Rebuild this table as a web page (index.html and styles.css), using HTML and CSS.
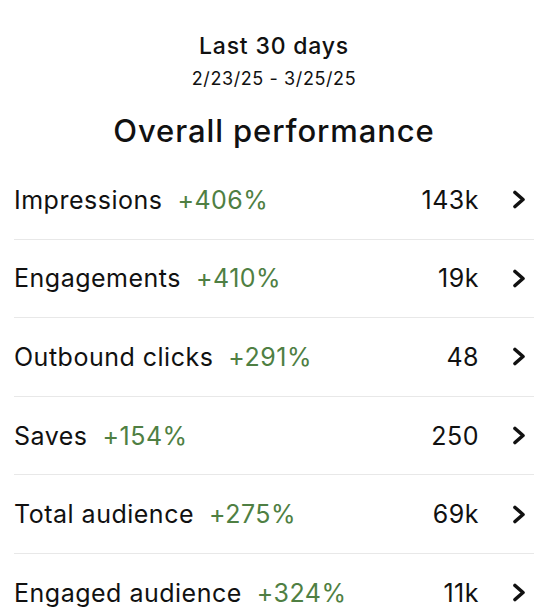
FILE: index.html
```html
<!DOCTYPE html>
<html>
  <head>
    <title>Overall performance</title>
    <link rel="stylesheet" href="styles.css">
  </head>
  <body>
    <div class="panel">
      <div class="range">
        <div class="range-title">Last 30 days</div>
        <div class="range-dates">2/23/25 - 3/25/25</div>
      </div>
      <h1>Overall performance</h1>
      <ul class="metrics">
        <li class="metric">
          <span class="name">Impressions</span>
          <span class="change">+406%</span>
          <span class="value">143k</span>
          <svg class="chev" viewBox="0 0 15 19"><polyline points="3,2.5 11,9.5 3,16.5"/></svg>
        </li>
        <li class="metric">
          <span class="name">Engagements</span>
          <span class="change">+410%</span>
          <span class="value">19k</span>
          <svg class="chev" viewBox="0 0 15 19"><polyline points="3,2.5 11,9.5 3,16.5"/></svg>
        </li>
        <li class="metric">
          <span class="name">Outbound clicks</span>
          <span class="change">+291%</span>
          <span class="value">48</span>
          <svg class="chev" viewBox="0 0 15 19"><polyline points="3,2.5 11,9.5 3,16.5"/></svg>
        </li>
        <li class="metric">
          <span class="name">Saves</span>
          <span class="change">+154%</span>
          <span class="value">250</span>
          <svg class="chev" viewBox="0 0 15 19"><polyline points="3,2.5 11,9.5 3,16.5"/></svg>
        </li>
        <li class="metric">
          <span class="name">Total audience</span>
          <span class="change">+275%</span>
          <span class="value">69k</span>
          <svg class="chev" viewBox="0 0 15 19"><polyline points="3,2.5 11,9.5 3,16.5"/></svg>
        </li>
        <li class="metric">
          <span class="name">Engaged audience</span>
          <span class="change">+324%</span>
          <span class="value">11k</span>
          <svg class="chev" viewBox="0 0 15 19"><polyline points="3,2.5 11,9.5 3,16.5"/></svg>
        </li>
      </ul>
    </div>
  </body>
</html>
```

FILE: styles.css
```css
/* Performance summary panel */
body {
  margin: 0;
  padding: 0;
  background-color: #fff;
  font-family: Inter, "Noto Sans", sans-serif;
  color: #111;
}

.panel {
  width: 520px;
  padding: 32px 17px 0 14px;
}

.range {
  text-align: center;
}

.range-title {
  font-size: 23px;
  font-weight: 500;
  line-height: 28px;
  letter-spacing: 0.8px;
}

.range-dates {
  font-size: 18px;
  line-height: 22px;
  margin-top: 8px;
  letter-spacing: 0.6px;
}

h1 {
  margin: 21px 0 0;
  text-align: center;
  font-size: 31px;
  font-weight: 500;
  line-height: 40px;
  letter-spacing: 0.9px;
}

.metrics {
  list-style: none;
  margin: 10px 0 0;
  padding: 0;
}

.metric {
  display: flex;
  align-items: center;
  height: 77.6px;
  border-bottom: 1px solid #e8e8e8; /* Light grey divider */
  font-size: 25px;
  letter-spacing: 0.5px;
}

.metric:last-child {
  border-bottom: none;
}

.name {
  margin-right: 15px;
}

.change {
  color: #4f7f43; /* Green */
}

.value {
  margin-left: auto;
  margin-right: 33px;
}

.chev {
  width: 15px;
  height: 19px;
  margin-right: 7px;
  fill: none;
  stroke: #111;
  stroke-width: 3.6;
  stroke-linecap: round;
  stroke-linejoin: round;
}
```
